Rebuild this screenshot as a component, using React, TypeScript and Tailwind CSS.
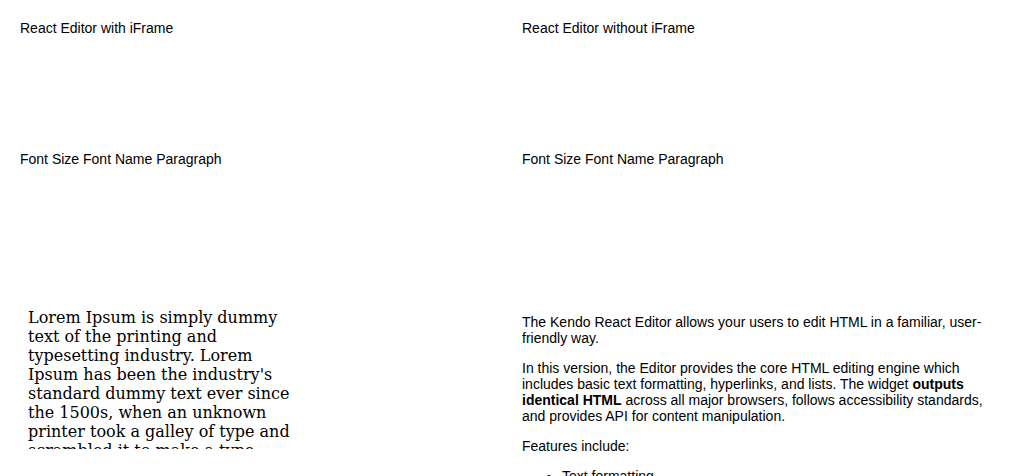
import React from "react";

const LOREM =
  "Lorem Ipsum is simply dummy text of the printing and typesetting industry. Lorem Ipsum has been the industry's standard dummy text ever since the 1500s, when an unknown printer took a galley of type and scrambled it to make a type specimen book. It has survived not only five centuries, but also the leap into electronic typesetting, remaining essentially unchanged.";

const FEATURES = [
  "Text formatting",
  "Bulleted and numbered lists",
  "Hyperlink and image dialogs",
  "Cleanup of pasted content",
];

const Toolbar: React.FC = () => (
  <div className="mt-[115px] h-4 leading-4">Font Size Font Name Paragraph</div>
);

export default function App() {
  return (
    <div className="flex gap-5 px-5 pt-5 h-[476px] overflow-hidden bg-white text-black text-sm font-['Liberation_Sans',Arial,sans-serif]">
      {/* Editor rendered inside an iframe */}
      <div className="w-[482px] shrink-0">
        <div className="h-4 leading-4">React Editor with iFrame</div>
        <Toolbar />
        <div className="mt-[132px] w-[300px] h-[150px] overflow-hidden pt-[9px] pl-2 pr-4">
          <p className="text-base leading-[normal] font-['DejaVu_Serif',serif]">{LOREM}</p>
        </div>
      </div>

      {/* Editor rendered inline */}
      <div className="w-[482px] shrink-0">
        <div className="h-4 leading-4">React Editor without iFrame</div>
        <Toolbar />
        <div className="mt-[147px] leading-[normal] flex flex-col gap-[14px]">
          <p>
            The Kendo React Editor allows your users to edit HTML in a familiar, user-friendly way.
          </p>
          <p>
            In this version, the Editor provides the core HTML editing engine which includes basic text
            formatting, hyperlinks, and lists. The widget <strong>outputs identical HTML</strong> across all
            major browsers, follows accessibility standards, and provides API for content manipulation.
          </p>
          <p>Features include:</p>
          <ul className="pl-10 list-disc">
            {FEATURES.map((f) => (
              <li key={f}>{f}</li>
            ))}
          </ul>
        </div>
      </div>
    </div>
  );
}
